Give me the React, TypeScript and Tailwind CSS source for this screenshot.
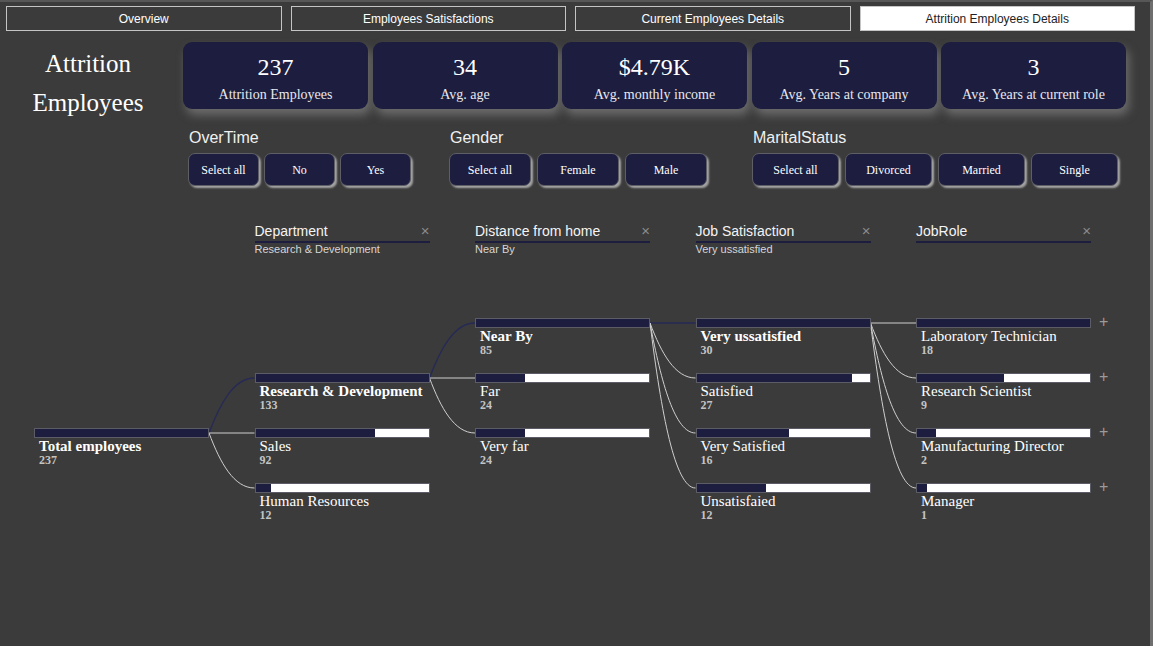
import React from 'react';

const TABS = [
  { label: 'Overview', active: false },
  { label: 'Employees Satisfactions', active: false },
  { label: 'Current Employees Details', active: false },
  { label: 'Attrition Employees Details', active: true },
];

const KPIS = [
  { value: '237', label: 'Attrition Employees' },
  { value: '34', label: 'Avg. age' },
  { value: '$4.79K', label: 'Avg. monthly income' },
  { value: '5', label: 'Avg. Years at company' },
  { value: '3', label: 'Avg. Years at current role' },
];

const FILTERS = [
  { title: 'OverTime', items: ['Select all', 'No', 'Yes'], w: 'w-[71px]', gap: 'gap-[5px]', ml: 'ml-[188px]' },
  { title: 'Gender', items: ['Select all', 'Female', 'Male'], w: 'w-[82px]', gap: 'gap-[6px]', ml: 'ml-[38px]' },
  { title: 'MaritalStatus', items: ['Select all', 'Divorced', 'Married', 'Single'], w: 'w-[87px]', gap: 'gap-[6px]', ml: 'ml-[45px]' },
];

const HEADERS = [
  { title: 'Department', sub: 'Research & Development' },
  { title: 'Distance from home', sub: 'Near By' },
  { title: 'Job Satisfaction', sub: 'Very ussatisfied' },
  { title: 'JobRole', sub: '' },
];

type Node = { label: string; count: number; bold?: boolean };

// each level: row where it starts (0 = top row), nodes
const LEVELS: { start: number; nodes: Node[] }[] = [
  { start: 2, nodes: [{ label: 'Total employees', count: 237, bold: true }] },
  {
    start: 1,
    nodes: [
      { label: 'Research & Development', count: 133, bold: true },
      { label: 'Sales', count: 92 },
      { label: 'Human Resources', count: 12 },
    ],
  },
  {
    start: 0,
    nodes: [
      { label: 'Near By', count: 85, bold: true },
      { label: 'Far', count: 24 },
      { label: 'Very far', count: 24 },
    ],
  },
  {
    start: 0,
    nodes: [
      { label: 'Very ussatisfied', count: 30, bold: true },
      { label: 'Satisfied', count: 27 },
      { label: 'Very Satisfied', count: 16 },
      { label: 'Unsatisfaied', count: 12 },
    ],
  },
  {
    start: 0,
    nodes: [
      { label: 'Laboratory Technician', count: 18 },
      { label: 'Research Scientist', count: 9 },
      { label: 'Manufacturing Director', count: 2 },
      { label: 'Manager', count: 1 },
    ],
  },
];

const COL_X = [34, 254.5, 475, 695.5, 916];
const COL_W = 175;
const ROW_H = 55;
const BAR_MID = 5;

function Bar({ pct }: { pct: number }) {
  return (
    <div className="h-[10px] w-[175px] flex border border-[#5c5c66] bg-white">
      <div className="h-full bg-[#1c1d3f]" style={{ width: `${pct}%` }} />
    </div>
  );
}

function Connectors() {
  const paths: { d: string; sel: boolean }[] = [];
  const parentRow = [2, 1, 0, 0];
  for (let lvl = 0; lvl < 4; lvl++) {
    const x1 = COL_X[lvl] + COL_W;
    const y1 = parentRow[lvl] * ROW_H + BAR_MID;
    const child = LEVELS[lvl + 1];
    child.nodes.forEach((n, i) => {
      const x2 = COL_X[lvl + 1];
      const y2 = (child.start + i) * ROW_H + BAR_MID;
      const dx = x2 - x1;
      const dy = y2 - y1;
      const d = dy === 0
        ? `M${x1} ${y1} L${x2} ${y2}`
        : `M${x1} ${y1} C${x1 + dx * 0.25} ${y1 + dy * 0.55} ${x2 - dx * 0.45} ${y2} ${x2} ${y2}`;
      paths.push({ d, sel: !!n.bold });
    });
  }
  return (
    <svg className="absolute left-0 top-0 pointer-events-none" width="1153" height="240">
      {paths.map((p, i) => (
        <path key={i} d={p.d} fill="none" stroke={p.sel ? '#262a55' : '#cfcfcf'} strokeWidth={p.sel ? 1.4 : 1} />
      ))}
    </svg>
  );
}

export default function App() {
  const serif = { fontFamily: '"Liberation Serif", "DejaVu Serif", serif' };
  const sans = { fontFamily: '"Liberation Sans", Arial, sans-serif' };

  return (
    <div
      className="w-[1153px] h-[646px] overflow-hidden bg-[#3b3b3b] border-t-2 border-[#575757] border-r-[3px] border-r-[#6e6e6e] text-white"
      style={sans}
    >
      {/* Tabs */}
      <div className="flex gap-[9px] pl-[6px] mt-[4px]">
        {TABS.map((t) => (
          <div
            key={t.label}
            className={`w-[275.5px] h-[25px] flex items-center justify-center text-[12px] border border-[#c4c4c4] ${
              t.active ? 'bg-white text-[#222]' : 'bg-[#3b3b3b] text-white'
            }`}
          >
            {t.label}
          </div>
        ))}
      </div>

      {/* Title + KPI cards */}
      <div className="flex mt-[11px] h-[67px]">
        <div className="w-[176px] mt-[2px] text-center text-[25px] leading-[39px] text-white" style={serif}>
          <div>Attrition</div>
          <div>Employees</div>
        </div>
        <div className="flex gap-[4.5px] ml-[7px]">
          {KPIS.map((k) => (
            <div
              key={k.label}
              className="w-[185px] h-[67px] rounded-[9px] bg-[#1c1d3f] flex flex-col items-center shadow-[3px_6px_10px_rgba(120,120,120,0.8)]"
              style={serif}
            >
              <div className="text-[24px] leading-[28px] mt-[11px]">{k.value}</div>
              <div className="text-[14px] leading-[16px] mt-[6px] text-[#e8e8ee]">{k.label}</div>
            </div>
          ))}
        </div>
      </div>

      {/* Slicers */}
      <div className="flex mt-[20px]">
        {FILTERS.map((f) => (
          <div key={f.title} className={f.ml}>
            <div className="text-[16px] leading-[18px] text-[#f0f0f0] pl-[1px]">{f.title}</div>
            <div className={`flex mt-[6px] ${f.gap}`}>
              {f.items.map((it) => (
                <div
                  key={it}
                  className={`${f.w} h-[33px] rounded-[7px] bg-[#1c1d3f] border border-[#5e5e66] flex items-center justify-center text-[12px] text-white shadow-[2px_2px_2px_rgba(190,190,190,0.8)]`}
                  style={serif}
                >
                  {it}
                </div>
              ))}
            </div>
          </div>
        ))}
      </div>

      {/* Decomposition tree headers */}
      <div className="flex mt-[37px] ml-[254.5px] gap-[45.5px]">
        {HEADERS.map((h) => (
          <div key={h.title} className="w-[175px]">
            <div className="flex items-center justify-between pb-[2px] border-b-2 border-[#1c1d3f] h-[20px]">
              <span className="text-[14px] leading-[16px] text-[#f4f4f4]">{h.title}</span>
              <span className="text-[15px] leading-[16px] text-[#8c8c8c]">×</span>
            </div>
            <div className="text-[11px] leading-[13px] h-[13px] text-[#d6d6d6]">{h.sub}</div>
          </div>
        ))}
      </div>

      {/* Tree */}
      <div className="relative mt-[62px]">
        <Connectors />
        <div className="relative flex">
          {LEVELS.map((lvl, li) => {
            const max = Math.max(...lvl.nodes.map((n) => n.count));
            return (
              <div
                key={li}
                className={`w-[175px] flex flex-col ${
                  li === 0 ? 'ml-[34px] pt-[110px]' : li === 1 ? 'ml-[45.5px] pt-[55px]' : 'ml-[45.5px]'
                }`}
              >
                {lvl.nodes.map((n) => (
                  <div key={n.label} className="h-[55px] relative">
                    <Bar pct={(n.count / max) * 100} />
                    {li === 4 && (
                      <span className="absolute left-[183px] top-[-4px] text-[16px] leading-[16px] text-[#9a9a9a]">+</span>
                    )}
                    <div className="pl-[5px]" style={serif}>
                      <div className={`text-[15px] leading-[16px] text-white ${n.bold ? 'font-bold' : ''}`}>{n.label}</div>
                      <div className="text-[12px] leading-[12px] font-bold text-[#c4c4c4]">{n.count}</div>
                    </div>
                  </div>
                ))}
              </div>
            );
          })}
        </div>
      </div>
    </div>
  );
}
